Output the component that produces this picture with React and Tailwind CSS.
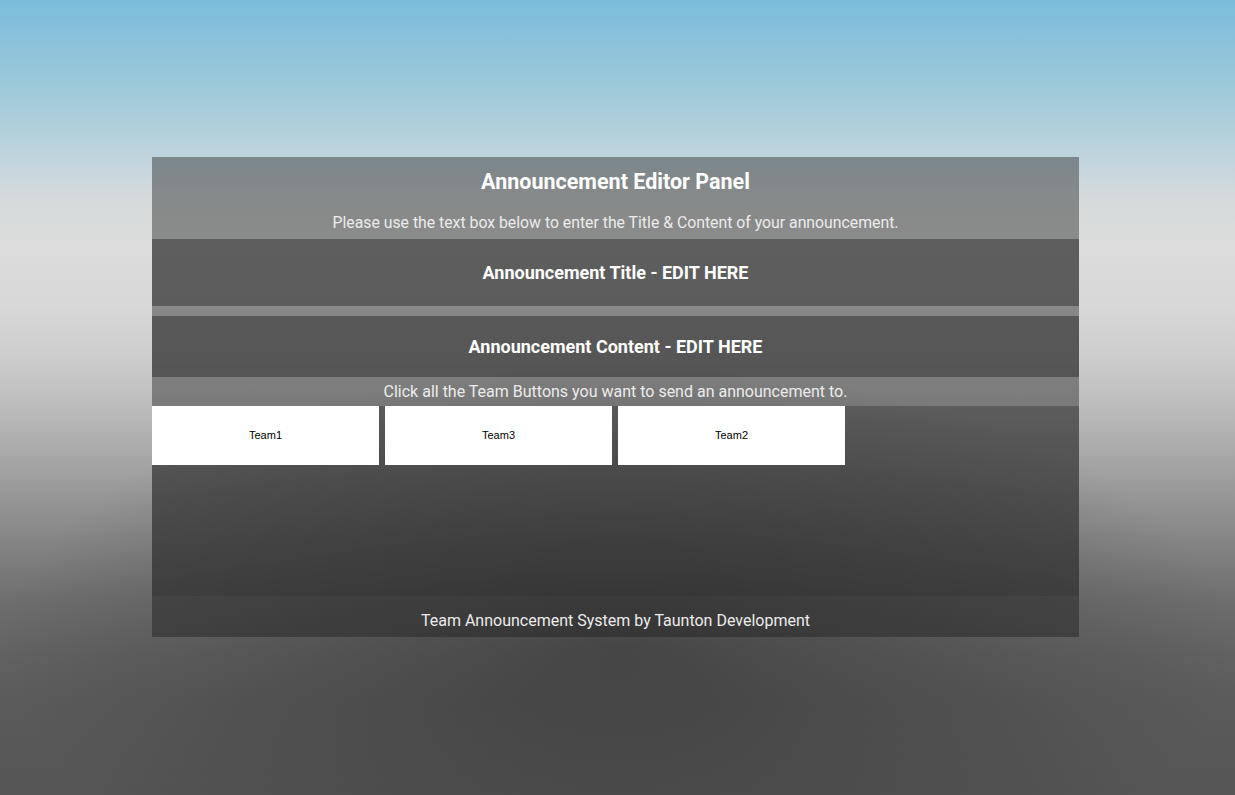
import React from 'react';

const teams = ['Team1', 'Team3', 'Team2'];

function App() {
    return (
        <div className="flex h-screen w-full items-start justify-center pt-[157px] pr-[4px] bg-[radial-gradient(ellipse_50%_36%_at_50%_82%,rgba(40,40,40,0.5),rgba(40,40,40,0)),linear-gradient(180deg,#7bbcdc_0%,#a3cbd9_12.6%,#bcd4dd_19%,#d5dadb_25%,#dcdcdc_31%,#d8d8d8_38%,#cfcfcf_44%,#c0c0c0_50%,#a9a9a9_57%,#959595_63%,#828282_69%,#6e6e6e_75.5%,#626262_82%,#5b5b5b_88%,#555555_100%)]">
            {/* Editor panel */}
            <div className="flex w-[927px] flex-col font-['Roboto',sans-serif] text-white">
                <div className="flex h-[82px] flex-col bg-[#282828]/45">
                    <div className="flex h-[50px] items-center justify-center">
                        <h1 className="text-[21.5px] font-bold leading-none">Announcement Editor Panel</h1>
                    </div>
                    <div className="flex h-[32px] items-center justify-center">
                        <p className="text-[15.8px] leading-none text-[#ececec]">
                            Please use the text box below to enter the Title &amp; Content of your announcement.
                        </p>
                    </div>
                </div>

                <div className="flex h-[67px] items-center justify-center bg-[#282828]/70">
                    <span className="text-[18px] font-bold leading-none">Announcement Title - EDIT HERE</span>
                </div>

                <div className="h-[10px] bg-[#282828]/45"></div>

                <div className="flex h-[61px] items-center justify-center bg-[#282828]/72">
                    <span className="text-[18px] font-bold leading-none">Announcement Content - EDIT HERE</span>
                </div>

                <div className="flex h-[29px] items-center justify-center bg-[#282828]/45">
                    <span className="text-[16px] leading-none text-[#ececec]">
                        Click all the Team Buttons you want to send an announcement to.
                    </span>
                </div>

                <div className="h-[190px] bg-[#282828]/65">
                    <div className="flex gap-[6px]">
                        {teams.map((t) => (
                            <button
                                key={t}
                                className="flex h-[59px] w-[227px] items-center justify-center bg-white font-['Liberation_Sans',sans-serif] text-[11px] text-black"
                            >
                                {t}
                            </button>
                        ))}
                    </div>
                </div>

                <div className="flex h-[41px] justify-center bg-[#282828]/55 pt-[17px]">
                    <span className="text-[16px] leading-none text-[#ececec]">
                        Team Announcement System by Taunton Development
                    </span>
                </div>
            </div>
        </div>
    );
}

export default App;
